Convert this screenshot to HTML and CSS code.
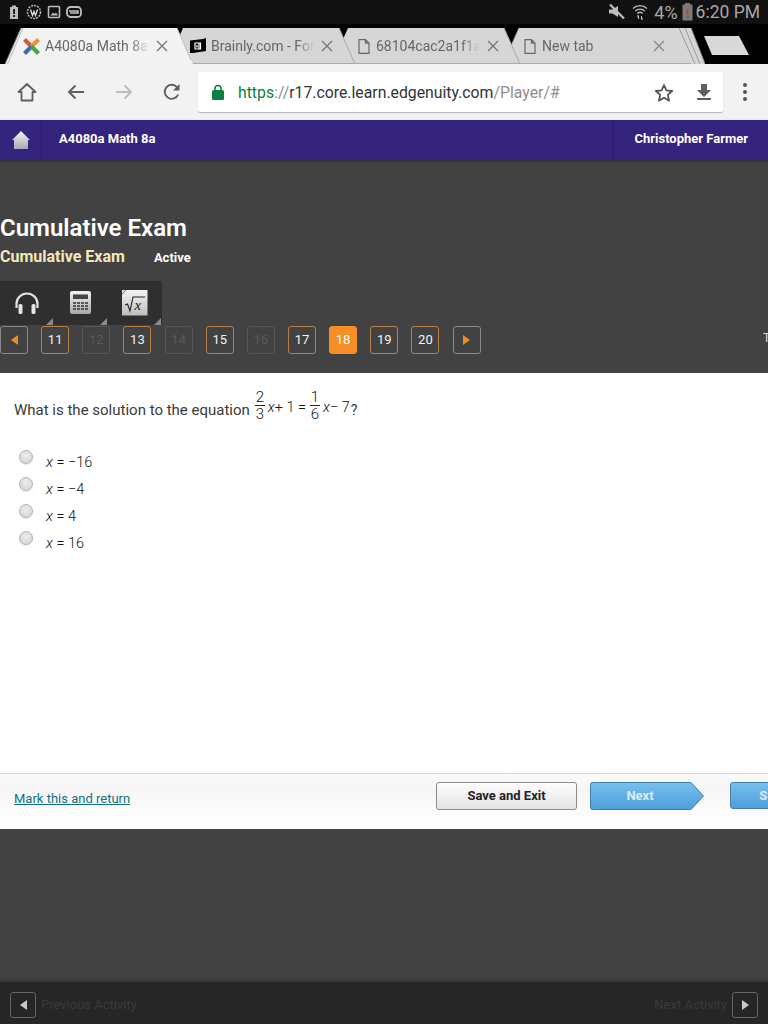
FILE: index.html
```html
<!DOCTYPE html>
<html lang="en">
<head>
<meta charset="utf-8">
<title>A4080a Math 8a</title>
<link rel="stylesheet" href="styles.css">
</head>
<body>
<div class="page">
  <div class="status">
    <div class="status-left">
      <svg width="14" height="16" viewBox="0 0 14 16"><path d="M3 3h2V1.500h4V3h2v12H3z" fill="#bdbdbd"/><rect x="6.200" y="5" width="1.800" height="5" fill="#111"/><rect x="6.200" y="11" width="1.800" height="2" fill="#111"/></svg>
      <svg width="16" height="16" viewBox="0 0 16 16"><circle cx="8" cy="8" r="6.500" fill="none" stroke="#bdbdbd" stroke-width="1.500" stroke-dasharray="2 1"/><path d="M4.500 5.500l2 6 1.500-4 1.500 4 2-6" fill="none" stroke="#ddd" stroke-width="1.400"/></svg>
      <svg width="14" height="14" viewBox="0 0 14 14"><rect x="1.500" y="1.500" width="11" height="11" rx="1" fill="none" stroke="#bdbdbd" stroke-width="1.600"/><path d="M3.500 10.500l2.500-3 1.500 1.500 1.500-1.500 2 3z" fill="#bdbdbd"/></svg>
      <svg width="16" height="14" viewBox="0 0 16 14"><rect x="1" y="2" width="14" height="10" rx="3.500" fill="none" stroke="#bdbdbd" stroke-width="1.800"/><path d="M3 6h9v2H4" fill="none" stroke="#bdbdbd" stroke-width="1.500"/></svg>
    </div>
    <div class="status-right">
      <svg width="18" height="18" viewBox="0 0 18 18"><path d="M1 6.500h3.500L10 3v11L4.500 10.500H1z" fill="#bdbdbd"/><path d="M2 1.500l14 14" stroke="#bdbdbd" stroke-width="2.200"/></svg>
      <svg class="wifi" width="16" height="18" viewBox="0 0 16 18"><path d="M1 5.500a10 10 0 0 1 14 0M3.200 8a7 7 0 0 1 9.600 0M5.300 10.500a4 4 0 0 1 5.400 0" fill="none" stroke="#bdbdbd" stroke-width="1.300"/><path d="M6.500 13v3M6.500 12l-1.300 1.500M9.500 16v-3M9.500 17l1.300-1.500" stroke="#bdbdbd" stroke-width="1.100"/></svg>
      <span class="pct">4%</span>
      <svg class="batt" width="11" height="18" viewBox="0 0 11 18"><rect x="3" y="0" width="5" height="2" fill="#7a7a7a"/><rect x="0.500" y="1.500" width="10" height="16" fill="#7a7a7a"/><rect x="4.500" y="6" width="2" height="6" fill="#b04a35"/><rect x="4.500" y="13" width="2" height="2" fill="#b04a35"/></svg>
      <span class="clock">6:20 PM</span>
    </div>
  </div>

  <div class="tabstrip">
    <div class="tab tab-active tab-one">
      <svg class="tab-shape" viewBox="0 0 188 36" preserveAspectRatio="none"><path d="M0 36L16 0H172L188 36Z" fill="#f2f2f2"/><path d="M2.500 36L18 0M172 0L186 32" stroke="#bbb" fill="none"/><path d="M0 36L16 0" stroke="#777" fill="none"/></svg>
      <svg class="fav" width="17" height="17" viewBox="0 0 17 17"><path d="M1.500 1.500L8.500 8.500" stroke="#e0552f" stroke-width="4"/><path d="M15.500 1.500L8.500 8.500" stroke="#ee8f2b" stroke-width="4"/><path d="M1.500 15.500L8.500 8.500" stroke="#2f6fb5" stroke-width="4"/><path d="M15.500 15.500L8.500 8.500" stroke="#3ea54a" stroke-width="4"/></svg>
      <span class="tab-title">A4080a Math 8a</span>
      <svg class="tab-x" width="12" height="12" viewBox="0 0 12 12"><path d="M1 1l10 10M11 1L1 11" stroke="#777" stroke-width="1.400"/></svg>
    </div>
    <div class="tab tab-two">
      <svg class="tab-shape" viewBox="0 0 188 36" preserveAspectRatio="none"><path d="M0 36L16 0H172L188 36Z" fill="#d6d6d6"/><path d="M172 0L188 36M0 35.500H188" stroke="#aaa" fill="none"/></svg>
      <svg class="fav" width="16" height="16" viewBox="0 0 16 16"><path d="M0 2.500L13 1l3-1v13L3 15H0z" fill="#000"/><path d="M5 5h5.500v6H5zM7 7v2.500M9 5v6" stroke="#fff" stroke-width="1.200" fill="none"/></svg>
      <span class="tab-title">Brainly.com - For</span>
      <svg class="tab-x" width="12" height="12" viewBox="0 0 12 12"><path d="M1 1l10 10M11 1L1 11" stroke="#777" stroke-width="1.400"/></svg>
    </div>
    <div class="tab tab-three">
      <svg class="tab-shape" viewBox="0 0 188 36" preserveAspectRatio="none"><path d="M0 36L16 0H172L188 36Z" fill="#d6d6d6"/><path d="M172 0L188 36M0 35.500H188" stroke="#aaa" fill="none"/></svg>
      <svg class="fav" width="12" height="15" viewBox="0 0 12 15"><path d="M1 .7H7.500L11 4.200V14.300H1ZM7.500 .7V4.200H11" fill="none" stroke="#666" stroke-width="1.200"/></svg>
      <span class="tab-title">68104cac2a1f1a</span>
      <svg class="tab-x" width="12" height="12" viewBox="0 0 12 12"><path d="M1 1l10 10M11 1L1 11" stroke="#777" stroke-width="1.400"/></svg>
    </div>
    <div class="tab tab-four">
      <svg class="tab-shape" viewBox="0 0 188 36" preserveAspectRatio="none"><path d="M0 36L16 0H172L188 36Z" fill="#d6d6d6"/><path d="M16 0L0 36M0 35.500H188" stroke="#aaa" fill="none"/></svg>
      <svg class="fav" width="12" height="15" viewBox="0 0 12 15"><path d="M1 .7H7.500L11 4.200V14.300H1ZM7.500 .7V4.200H11" fill="none" stroke="#666" stroke-width="1.200"/></svg>
      <span class="tab-title">New tab</span>
      <svg class="tab-x" width="12" height="12" viewBox="0 0 12 12"><path d="M1 1l10 10M11 1L1 11" stroke="#888" stroke-width="1.400"/></svg>
    </div>
    <svg class="tab-stack" width="34" height="36" viewBox="0 0 34 36"><path d="M0 36V0H20L34 36Z" fill="#d6d6d6"/><path d="M1 0L16 36M8 0L24 36M14 0L29 36M20 0L34 36" stroke="#999" fill="none"/></svg>
    <svg class="new-tab" width="46" height="20" viewBox="0 0 46 20"><path d="M0 0H35L45 19H8Z" fill="#d8d8d8"/></svg>
  </div>

  <div class="toolbar">
    <svg class="tb-home" width="20" height="20" viewBox="0 0 20 20"><path d="M10 2L1.500 10H4.500V18.500H15.500V10H18.500Z" fill="none" stroke="#5f5f5f" stroke-width="1.800" stroke-linejoin="round"/></svg>
    <svg class="tb-back" width="18" height="16" viewBox="0 0 18 16"><path d="M17 8H2M8.500 1.500L2 8l6.500 6.500" fill="none" stroke="#5f5f5f" stroke-width="1.900"/></svg>
    <svg class="tb-fwd" width="18" height="16" viewBox="0 0 18 16"><path d="M1 8h15M9.500 1.500L16 8l-6.500 6.500" fill="none" stroke="#bcbcbc" stroke-width="1.900"/></svg>
    <svg class="tb-reload" width="18" height="18" viewBox="0 0 18 18"><path d="M15.200 11.500A7 7 0 1 1 14 4.200" fill="none" stroke="#5f5f5f" stroke-width="1.900"/><path d="M16.500 1v6.500H10z" fill="#5f5f5f"/></svg>
    <div class="omnibox">
      <svg class="lock" width="12" height="16" viewBox="0 0 12 16"><path d="M3 7V4.500a3 3 0 0 1 6 0V7" fill="none" stroke="#0b8043" stroke-width="1.600"/><rect x="0" y="6" width="12" height="10" rx="1.500" fill="#0b8043"/></svg>
      <div class="url"><span class="u-green">https</span><span class="u-grey">://</span><span class="u-dark">r17.core.learn.edgenuity.com</span><span class="u-grey">/Player/#</span></div>
      <svg class="star" width="20" height="19" viewBox="0 0 20 19"><path d="M10 2l2.400 5.400 5.800.6-4.400 3.900 1.300 5.700L10 14.700l-5.100 2.900 1.300-5.700L1.800 8l5.800-.6z" fill="none" stroke="#555" stroke-width="1.800" stroke-linejoin="round"/></svg>
      <svg class="dl" width="14" height="16" viewBox="0 0 14 16"><path d="M4 0h6v6h4l-7 7-7-7h4z" fill="#5f5f5f"/><rect x="0" y="14" width="14" height="2" fill="#5f5f5f"/></svg>
    </div>
    <div class="dots"><i></i><i></i><i></i></div>
  </div>

  <div class="topnav">
    <div class="nav-home">
      <svg width="18" height="20" viewBox="0 0 18 20"><defs><linearGradient id="hm" x1="0" y1="0" x2="0" y2="1"><stop offset="0" stop-color="#f4f4f4"/><stop offset="1" stop-color="#a9a9b2"/></linearGradient></defs><path d="M9 1L18 10H16V19H2V10H0Z" fill="url(#hm)"/></svg>
    </div>
    <div class="nav-title">A4080a Math 8a</div>
    <div class="nav-user">Christopher Farmer</div>
  </div>

  <div class="header">
    <h1 class="h-title">Cumulative Exam</h1>
    <div class="h-sub"><span class="h-name">Cumulative Exam</span><span class="h-state">Active</span></div>
    <div class="tools">
      <div class="tool">
        <svg width="26" height="23" viewBox="0 0 26 23"><path d="M2.500 16V12a10.500 10.500 0 0 1 21 0v4" fill="none" stroke="#e4e4e4" stroke-width="2.200"/><rect x="4.500" y="12" width="4" height="10" rx="1.500" fill="#e4e4e4"/><rect x="17.500" y="12" width="4" height="10" rx="1.500" fill="#e4e4e4"/></svg>
      </div>
      <div class="tool">
        <svg width="22" height="24" viewBox="0 0 22 24"><defs><linearGradient id="cl" x1="0" y1="0" x2="0" y2="1"><stop offset="0" stop-color="#f2f2f2"/><stop offset="1" stop-color="#a8a8a8"/></linearGradient></defs><rect width="21" height="23" rx="2" fill="url(#cl)"/><rect x="3" y="3.500" width="15" height="4.500" fill="#444"/><path d="M3 11h3v2H3zM7 11h3v2H7zM11 11h3v2h-3zM15 11h3v2h-3zM3 14h3v2H3zM7 14h3v2H7zM11 14h3v2h-3zM15 14h3v2h-3zM3 17h3v2H3zM7 17h3v2H7zM11 17h3v2h-3zM15 17h3v2h-3z" fill="#555"/></svg>
      </div>
      <div class="tool">
        <svg width="26" height="26" viewBox="0 0 26 26"><defs><linearGradient id="sq" x1="0" y1="0" x2="0" y2="1"><stop offset="0" stop-color="#f4f4f4"/><stop offset="1" stop-color="#bdbdbd"/></linearGradient></defs><path d="M4.500 0H25.500V25.500H0V4.500Z" fill="url(#sq)"/><path d="M0 0H4L0 4Z" fill="#ddd"/><path d="M3 15l2.500-1 2.500 7 3-14h12" fill="none" stroke="#222" stroke-width="1.100"/><text class="sq-x" x="12.500" y="20">x</text></svg>
      </div>
    </div>
    <div class="pager">
      <div class="pg pg-arrow"><svg width="7" height="10" viewBox="0 0 7 10"><path d="M7 0v10L0 5z" fill="#f08a24"/></svg></div>
      <div class="pg">11</div>
      <div class="pg pg-off">12</div>
      <div class="pg">13</div>
      <div class="pg pg-off">14</div>
      <div class="pg">15</div>
      <div class="pg pg-off">16</div>
      <div class="pg">17</div>
      <div class="pg pg-on">18</div>
      <div class="pg">19</div>
      <div class="pg">20</div>
      <div class="pg pg-arrow"><svg width="7" height="10" viewBox="0 0 7 10"><path d="M0 0v10l7-5z" fill="#f08a24"/></svg></div>
      <div class="pg-more">T</div>
    </div>
  </div>

  <div class="content">
    <div class="question">
      <span class="q-text">What is the solution to the equation</span>
      <span class="eq">
        <span class="frac"><span>2</span><span class="den">3</span></span>
        <span class="eq-t"><i>x</i>+ 1 =</span>
        <span class="frac"><span>1</span><span class="den">6</span></span>
        <span class="eq-t"><i>x</i>− 7</span>
      </span>
      <span class="qm">?</span>
    </div>
    <div class="answers">
      <div class="answer"><span class="radio"></span><span class="a-text"><i>x</i> = −16</span></div>
      <div class="answer"><span class="radio"></span><span class="a-text"><i>x</i> = −4</span></div>
      <div class="answer"><span class="radio"></span><span class="a-text"><i>x</i> = 4</span></div>
      <div class="answer"><span class="radio"></span><span class="a-text"><i>x</i> = 16</span></div>
    </div>
  </div>

  <div class="footer">
    <a class="mark" href="#">Mark this and return</a>
    <div class="btn-save">Save and Exit</div>
    <div class="btn-next">
      <svg class="next-shape" viewBox="0 0 114 28" preserveAspectRatio="none"><defs><linearGradient id="nx" x1="0" y1="0" x2="0" y2="1"><stop offset="0" stop-color="#78c0ee"/><stop offset="1" stop-color="#4d9edb"/></linearGradient></defs><path d="M.5 2.500a2 2 0 0 1 2-2H101L113.500 14 101 27.500H2.500a2 2 0 0 1-2-2Z" fill="url(#nx)" stroke="#3f7fb0"/></svg>
      <span>Next</span>
    </div>
    <div class="btn-submit">Submit</div>
  </div>

  <div class="lower"></div>

  <div class="bottom">
    <div class="bt-btn"><svg width="7" height="10" viewBox="0 0 7 10"><path d="M7 0v10L0 5z" fill="#c9c9c9"/></svg></div>
    <span class="bt-text">Previous Activity</span>
    <span class="bt-text bt-right">Next Activity</span>
    <div class="bt-btn"><svg width="7" height="10" viewBox="0 0 7 10"><path d="M0 0v10l7-5z" fill="#c9c9c9"/></svg></div>
  </div>
</div>
</body>
</html>
```
FILE: styles.css
```css
* { box-sizing: border-box; }
html, body { margin: 0; padding: 0; }
body { width: 768px; height: 1024px; overflow: hidden; font-family: Roboto, "Liberation Sans", sans-serif; background: #424242; }
.page { width: 768px; height: 1024px; display: flex; flex-direction: column; overflow: hidden; }

.status { height: 24px; flex: none; background: #111; display: flex; justify-content: space-between; align-items: center; color: #a8a8a8; }
.status-left { display: flex; align-items: center; gap: 5px; padding-left: 7px; }
.status-right { display: flex; align-items: center; padding-right: 8px; }
.wifi { margin-left: 6px; }
.pct { font-size: 18px; margin-left: 6px; }
.batt { margin-left: 4px; }
.clock { font-size: 17.500px; margin-left: 3px; }

.tabstrip { height: 40px; flex: none; background: #000; display: flex; align-items: flex-end; padding-left: 5px; }
.tab { position: relative; width: 188px; height: 36px; flex: none; display: flex; align-items: center; font-size: 14px; color: #666; }
.tab-shape { position: absolute; left: 0; top: 0; width: 100%; height: 100%; }
.tab > .fav, .tab > .tab-title, .tab > .tab-x { position: relative; }
.tab-one { z-index: 4; padding-left: 18px; padding-right: 25px; }
.tab-two { z-index: 3; margin-left: -26px; padding-left: 23px; padding-right: 22px; }
.tab-three { z-index: 2; margin-left: -23px; padding-left: 26px; padding-right: 21px; }
.tab-four { z-index: 1; margin-left: -17px; padding-left: 21px; padding-right: 26px; }
.tab-title { flex: none; width: 104px; margin-left: 5px; white-space: nowrap; overflow: hidden; -webkit-mask-image: linear-gradient(90deg, #000 82%, transparent 100%); mask-image: linear-gradient(90deg, #000 82%, transparent 100%); }
.tab-two .tab-title { margin-left: 5px; }
.tab-three .tab-title { margin-left: 6px; }
.tab-four .tab-title { margin-left: 6px; }
.tab-x { margin-left: auto; flex: none; }
.tab-stack { flex: none; margin-left: -20px; }
.new-tab { flex: none; margin-left: -1px; margin-bottom: 8px; }

.toolbar { height: 56px; flex: none; background: #f2f2f2; display: flex; align-items: center; padding-left: 17px; }
.tb-back { margin-left: 30px; }
.tb-fwd { margin-left: 30px; }
.tb-reload { margin-left: 30px; }
.omnibox { width: 525px; height: 40px; margin-left: 17px; background: #fff; border-radius: 2px; box-shadow: 0 1px 1px rgba(0,0,0,.25); display: flex; align-items: center; padding-left: 14px; }
.url { margin-left: 14px; font-size: 15.800px; white-space: nowrap; width: 414px; }
.u-green { color: #0b8043; }
.u-grey { color: #8f8f8f; }
.u-dark { color: #333; }
.star { margin-left: 2px; }
.dl { margin-left: 23px; }
.dots { margin-left: 20px; display: flex; flex-direction: column; gap: 3px; }
.dots i { display: block; width: 4px; height: 4px; border-radius: 50%; background: #555; }

.topnav { height: 40px; flex: none; background: #35247d; display: flex; align-items: stretch; color: #fff; font-size: 13px; font-weight: 700; box-shadow: 0 1px 2px rgba(0,0,0,.35); position: relative; }
.nav-home { width: 42px; border-right: 1px solid #2c1d6a; display: flex; align-items: center; justify-content: center; padding-bottom: 1px; }
.nav-title { padding: 0 0 3px 17px; display: flex; align-items: center; }
.nav-user { margin-left: auto; width: 155px; border-left: 1px solid #2c1d6a; display: flex; align-items: center; justify-content: flex-end; padding: 0 20px 3px 0; }

.header { height: 213px; flex: none; background: #424242; padding-top: 54px; }
.h-title { margin: 0; font-size: 24px; line-height: 28px; font-weight: 600; color: #fff; }
.h-sub { display: flex; align-items: baseline; margin-top: 3px; height: 23px; }
.h-name { font-size: 16px; font-weight: 700; color: #f4e7b8; line-height: 23px; }
.h-state { margin-left: 29px; font-size: 13px; font-weight: 700; color: #fff; }
.tools { width: 162px; height: 44px; margin-top: 13px; background: #2f2f2f; display: flex; }
.tool { flex: 1; position: relative; display: flex; align-items: center; justify-content: center; }
.tool::after { content: ""; position: absolute; right: 1px; bottom: 0; border-style: solid; border-width: 0 0 7px 7px; border-color: transparent transparent #8a8a8a transparent; }
.sq-x { font-family: "Liberation Serif", serif; font-style: italic; font-size: 15px; fill: #222; }

.pager { display: flex; align-items: center; gap: 13.150px; margin-top: 1px; height: 28px; }
.pg { width: 28px; height: 28px; flex: none; border: 1px solid #b97f45; border-radius: 3px; display: flex; align-items: center; justify-content: center; padding-bottom: 2px; color: #f2f2f2; font-size: 13px; }
.pg-off { border-color: #565656; color: #5a5a5a; }
.pg-on { background: #f68d26; border-color: #f68d26; color: #fff; }
.pg-arrow { border-color: #8a8a8a; padding-bottom: 0; }
.pg-more { margin-left: auto; width: 5px; overflow: hidden; color: #ddd; font-size: 12px; padding-bottom: 4px; }

.content { height: 400px; flex: none; background: #fff; }
.question { display: flex; align-items: center; padding: 10px 0 0 14px; height: 54px; font-size: 15px; color: #3a3a3a; }
.q-text { position: relative; top: 5px; }
.eq { display: flex; align-items: center; margin-left: 5px; font-weight: 300; font-size: 14.500px; color: #111; }
.eq-t { margin: 0 1px 0 3px; white-space: nowrap; position: relative; top: 2px; }
.eq .frac + .eq-t + .frac { margin-left: 3px; }
.frac { display: flex; flex-direction: column; align-items: center; width: 10px; font-size: 15px; line-height: 16px; }
.den { border-top: 1px solid #222; width: 100%; text-align: center; }
.qm { position: relative; top: 5px; font-size: 14px; }
.answers { margin-top: 23px; display: flex; flex-direction: column; }
.answer { height: 27px; display: flex; align-items: flex-start; padding-left: 19px; }
.radio { width: 14px; height: 14px; border-radius: 50%; border: 1px solid #b5b5b5; background: radial-gradient(circle at 50% 40%, #eee, #cfcfcf); box-shadow: 0 1px 1px rgba(0,0,0,.1); flex: none; }
.a-text { margin-left: 13px; margin-top: 5px; font-weight: 300; font-size: 14.500px; line-height: 16px; color: #111; }

.footer { height: 56px; flex: none; border-top: 1px solid #d9d9d9; background: linear-gradient(#fafafa, #f6f6f6 30%, #fff); display: flex; align-items: flex-start; padding: 8px 0 0 14px; overflow: hidden; }
.mark { margin-top: 9px; width: 422px; flex: none; font-size: 13px; color: #10717f; text-decoration: underline; }
.btn-save { width: 141px; height: 28px; flex: none; border: 1px solid #8c8c8c; border-radius: 3px; background: linear-gradient(#fdfdfd, #e4e4e4); display: flex; align-items: center; justify-content: center; padding-bottom: 1px; font-size: 13px; font-weight: 700; color: #222; }
.btn-next { position: relative; width: 114px; height: 28px; flex: none; margin-left: 13px; display: flex; align-items: center; justify-content: center; padding: 0 14px 2px 0; font-size: 13px; font-weight: 700; color: #dcecf8; }
.next-shape { position: absolute; left: 0; top: 0; width: 100%; height: 100%; }
.btn-next span { position: relative; }
.btn-submit { width: 100px; height: 27px; flex: none; margin-left: 26px; border: 1px solid #3f7fb0; border-radius: 3px; background: linear-gradient(#78c0ee, #4d9edb); display: flex; align-items: center; justify-content: center; font-size: 13px; font-weight: 700; color: #dcecf8; }

.lower { flex: 1; background: #424242; }
.bottom { height: 42px; flex: none; background: #262626; box-shadow: 0 -2px 3px rgba(0,0,0,.25); display: flex; align-items: center; padding: 3px 10px 0; position: relative; font-size: 13px; color: #3a3a3a; }
.bt-btn { width: 26px; height: 26px; flex: none; border: 1px solid #666; border-radius: 3px; display: flex; align-items: center; justify-content: center; }
.bt-text { margin-left: 5px; }
.bt-right { margin-left: auto; margin-right: 5px; }
```
